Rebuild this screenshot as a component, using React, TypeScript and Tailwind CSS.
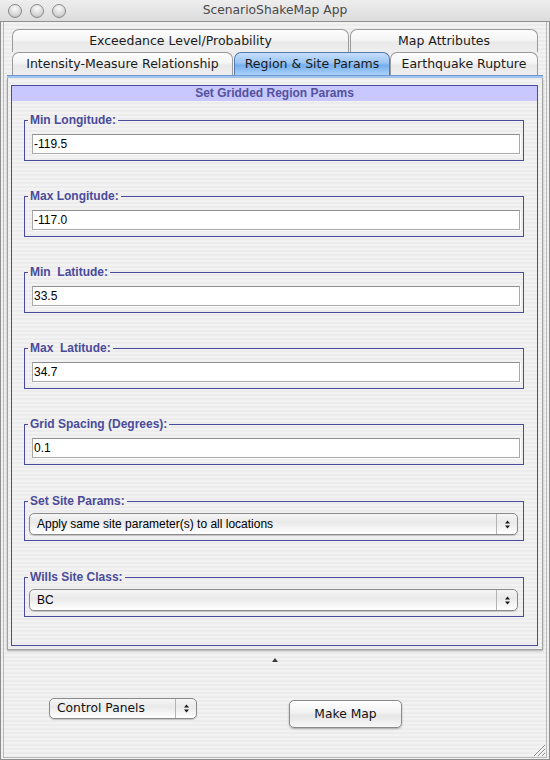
import type { ReactNode } from "react";
import clsx from "clsx";

const stripes =
  "bg-[repeating-linear-gradient(180deg,#ececec_0px,#ececec_2px,#f2f2f2_2px,#f2f2f2_4px)]";

const aquaFont = "font-['DejaVu_Sans',sans-serif]";
const swingFont = "font-['Liberation_Sans',Arial,sans-serif]";

function Light() {
  return (
    <span className="size-[14px] rounded-full border border-[#8a8a8a] bg-[radial-gradient(circle_at_50%_30%,#fbfbfb_0%,#dadada_55%,#b2b2b2_100%)]" />
  );
}

function Arrows() {
  return (
    <svg width="7" height="11" viewBox="0 0 7 11">
      <path d="M3.5 1.5 L6 4.5 H1 Z M1 6.5 H6 L3.5 9.5 Z" fill="#1a1a1a" />
    </svg>
  );
}

function Tab({
  label,
  className,
  selected,
}: {
  label: string;
  className: string;
  selected?: boolean;
}) {
  return (
    <div
      className={clsx(
        "flex h-[23px] items-center justify-center rounded-t-[7px] border border-b-0 text-[12.5px] text-[#1b1b1b]",
        aquaFont,
        selected
          ? "border-[#5479ae] bg-[linear-gradient(180deg,#c6dffb_0%,#9bc5f3_45%,#75aeec_55%,#a9d1fa_100%)]"
          : "border-[#9a9a9a] bg-[linear-gradient(180deg,#fdfdfd_0%,#f5f5f5_45%,#e9e9e9_55%,#eeeeee_100%)]",
        className,
      )}
    >
      {label}
    </div>
  );
}

function Group({ title, children }: { title: string; children: ReactNode }) {
  return (
    <fieldset className="border border-[#4b4b9b]">
      <legend
        className={clsx(
          "ml-[3px] whitespace-pre px-[2px] text-[12px] font-bold leading-[14px] text-[#4b4b9b]",
          swingFont,
        )}
      >
        {title}
      </legend>
      {children}
    </fieldset>
  );
}

function TextField({ value }: { value: string }) {
  return (
    <div className="pb-[6px] pl-[7px] pr-[3px] pt-[7px]">
      <div
        className={clsx(
          "h-[20px] border border-[#a8a8a8] border-t-[#8e8e8e] bg-white pl-[1px] text-[12px] leading-[18px] text-black shadow-[1px_1px_0_#ffffff]",
          swingFont,
        )}
      >
        {value}
      </div>
    </div>
  );
}

function Combo({ value }: { value: string }) {
  return (
    <div className="pb-[5px] pl-[4px] pr-[5px] pt-[5px]">
      <div className="flex h-[22px] items-center rounded-[5px] border border-[#8b8b8b] bg-[linear-gradient(180deg,#f6f6f6_0%,#e9e9e9_40%,#f4f4f4_70%,#ffffff_100%)] shadow-[0_1px_1px_rgba(0,0,0,0.18)]">
        <span className={clsx("flex-1 pl-[7px] text-[12px] text-black", swingFont)}>
          {value}
        </span>
        <span className="flex h-full w-[21px] items-center justify-center border-l border-[#b3b3b3]">
          <Arrows />
        </span>
      </div>
    </div>
  );
}

export default function App() {
  return (
    <div className={clsx("flex h-[760px] w-[550px] flex-col", stripes)}>
      <div className="grid h-[22px] grid-cols-[1fr_auto_1fr] items-center border-b border-[#8f8f8f] bg-[linear-gradient(180deg,#eeeeee,#dcdcdc)]">
        <div className="flex gap-[8px] pl-[8px]">
          <Light />
          <Light />
          <Light />
        </div>
        <span className={clsx("text-[12.3px] text-[#4a4a4a]", aquaFont)}>
          ScenarioShakeMap App
        </span>
        <span />
      </div>

      <div className="flex flex-1 flex-col border-x border-b border-[#8e8e8e] px-[2px] pb-[1px]">
        <div className="flex flex-1 flex-col border-x border-b border-[#b9b9b9] pt-[7px]">
          <div className="flex gap-[1px] pl-[8px]">
            <Tab label="Exceedance Level/Probability" className="w-[337px]" />
            <Tab label="Map Attributes" className="w-[188px]" />
          </div>
          <div className="flex pl-[8px]">
            <Tab label="Intensity-Measure Relationship" className="w-[221px]" />
            <Tab label="Region & Site Params" className="ml-[1px] w-[156px]" selected />
            <Tab label="Earthquake Rupture" className="w-[148px]" />
          </div>

          <div className="mx-[3px] h-[3px] border-t border-[#6e97cf] bg-[#a3c6f0]" />

          <div
            className={clsx(
              "mx-[3px] flex h-[572px] flex-col border-x border-b border-[#a3a3a3] pb-[3px] pl-[3px] pr-[4px] pt-[7px] shadow-[0_1px_2px_rgba(0,0,0,0.3)]",
              stripes,
            )}
          >
            <div className="flex flex-1 flex-col border border-[#4b4b9b]">
              <div
                className={clsx(
                  "h-[15px] bg-[#c8c8ff] text-center text-[12px] font-bold leading-[15px] text-[#52529c]",
                  swingFont,
                )}
              >
                Set Gridded Region Params
              </div>
              <div className="ml-[12px] mr-[13px] mt-[12px] flex flex-col gap-[28px]">
                <Group title="Min Longitude:">
                  <TextField value="-119.5" />
                </Group>
                <Group title="Max Longitude:">
                  <TextField value="-117.0" />
                </Group>
                <Group title="Min  Latitude:">
                  <TextField value="33.5" />
                </Group>
                <Group title="Max  Latitude:">
                  <TextField value="34.7" />
                </Group>
                <Group title="Grid Spacing (Degrees):">
                  <TextField value="0.1" />
                </Group>
                <div className="mt-[1px]">
                  <Group title="Set Site Params:">
                    <Combo value="Apply same site parameter(s) to all locations" />
                  </Group>
                </div>
                <div className="mt-[1px]">
                  <Group title="Wills Site Class:">
                    <Combo value="BC" />
                  </Group>
                </div>
              </div>
            </div>
          </div>

          <div className="flex h-[20px] items-center justify-center">
            <svg width="6" height="4" viewBox="0 0 6 4">
              <path d="M3 0 L6 4 H0 Z" fill="#3a3a3a" />
            </svg>
          </div>

          <div className="flex flex-1 items-start">
            <div
              className={clsx(
                "ml-[45px] mt-[28px] flex h-[21px] w-[148px] items-center rounded-[5px] border border-[#8b8b8b] bg-[linear-gradient(180deg,#f6f6f6_0%,#e9e9e9_40%,#f4f4f4_70%,#ffffff_100%)] shadow-[0_1px_1px_rgba(0,0,0,0.2)]",
                aquaFont,
              )}
            >
              <span className="flex-1 pl-[7px] text-[12.3px] text-[#111]">Control Panels</span>
              <span className="flex h-full w-[21px] items-center justify-center border-l border-[#b3b3b3]">
                <Arrows />
              </span>
            </div>
            <button
              type="button"
              className={clsx(
                "ml-[92px] mt-[30px] h-[28px] w-[113px] rounded-[5px] border border-[#8a8a8a] bg-[linear-gradient(180deg,#ffffff_0%,#f1f1f1_45%,#e6e6e6_55%,#f7f7f7_100%)] text-[12.3px] text-[#111] shadow-[0_1px_2px_rgba(0,0,0,0.3)]",
                aquaFont,
              )}
            >
              Make Map
            </button>
            <div className="ml-auto self-end pb-[1px] pr-[1px]">
              <svg width="12" height="12" viewBox="0 0 12 12">
                <path d="M12 1 L1 12 M12 5 L5 12 M12 9 L9 12" stroke="#8c8c8c" strokeWidth="1" />
                <path d="M12 2 L2 12 M12 6 L6 12 M12 10 L10 12" stroke="#ffffff" strokeWidth="1" />
              </svg>
            </div>
          </div>
        </div>
      </div>
    </div>
  );
}
